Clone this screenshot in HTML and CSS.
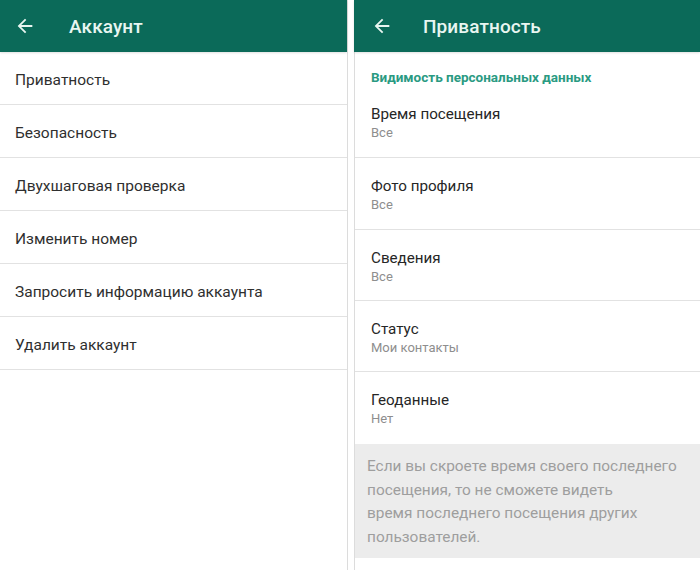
FILE: index.html
```html
<!DOCTYPE html>
<html lang="ru">
<head>
<meta charset="utf-8">
<link rel="stylesheet" href="styles.css">
</head>
<body>
<div class="screens">
  <section class="panel panel-left">
    <header class="appbar">
      <svg class="back" viewBox="0 0 24 24" width="22" height="22"><path d="M20 11H7.83l5.59-5.59L12 4l-8 8 8 8 1.41-1.41L7.83 13H20v-2z" fill="currentColor"/></svg>
      <h1 class="title">Аккаунт</h1>
    </header>
    <ul class="menu">
      <li class="menu-item">Приватность</li>
      <li class="menu-item">Безопасность</li>
      <li class="menu-item">Двухшаговая проверка</li>
      <li class="menu-item">Изменить номер</li>
      <li class="menu-item">Запросить информацию аккаунта</li>
      <li class="menu-item">Удалить аккаунт</li>
    </ul>
  </section>
  <section class="panel panel-right">
    <header class="appbar">
      <svg class="back" viewBox="0 0 24 24" width="22" height="22"><path d="M20 11H7.83l5.59-5.59L12 4l-8 8 8 8 1.41-1.41L7.83 13H20v-2z" fill="currentColor"/></svg>
      <h1 class="title">Приватность</h1>
    </header>
    <div class="section-title">Видимость персональных данных</div>
    <ul class="settings">
      <li class="setting"><div class="setting-name">Время посещения</div><div class="setting-value">Все</div></li>
      <li class="setting"><div class="setting-name">Фото профиля</div><div class="setting-value">Все</div></li>
      <li class="setting"><div class="setting-name">Сведения</div><div class="setting-value">Все</div></li>
      <li class="setting"><div class="setting-name">Статус</div><div class="setting-value">Мои контакты</div></li>
      <li class="setting setting-last"><div class="setting-name">Геоданные</div><div class="setting-value">Нет</div></li>
    </ul>
    <p class="note">Если вы скроете время своего последнего<br>посещения, то не сможете видеть<br>время последнего посещения других<br>пользователей.</p>
  </section>
</div>
</body>
</html>
```
FILE: styles.css
```css
* { box-sizing: border-box; }
html, body {
  margin: 0;
  padding: 0;
  background: #ffffff;
}
body {
  font-family: Roboto, "Noto Sans", "Liberation Sans", sans-serif;
  width: 700px;
  height: 570px;
  overflow: hidden;
}
.screens {
  display: flex;
  gap: 6px;
  height: 570px;
}
.panel {
  display: flex;
  flex-direction: column;
  height: 570px;
}
.panel-left {
  width: 348px;
  border-right: 1px solid #dcdcdc;
}
.panel-right {
  flex: 1;
  border-left: 1px solid #dcdcdc;
}
.appbar {
  height: 52px;
  flex: none;
  background: #0b6a59;
  display: flex;
  align-items: center;
  color: #e8f6f1;
  box-shadow: 0 1px 2px rgba(0,0,0,0.12);
}
.panel-left .appbar { padding-left: 14px; }
.panel-right .appbar { padding-left: 17px; margin-left: -1px; }
.back { flex: none; }
.title {
  margin: 0;
  font-size: 19px;
  font-weight: 500;
  letter-spacing: 0.1px;
}
.panel-left .title { margin-left: 33px; }
.panel-right .title { margin-left: 30px; }
.menu, .settings {
  list-style: none;
  margin: 0;
  padding: 0;
}
.menu-item {
  height: 53px;
  border-bottom: 1px solid #e2e2e2;
  display: flex;
  align-items: center;
  padding: 3px 15px 0;
  font-size: 15.5px;
  color: #2f2f2f;
}
.section-title {
  height: 34px;
  padding: 17px 0 0 16px;
  font-size: 13.5px;
  line-height: 16px;
  font-weight: 700;
  color: #2a9a82;
}
.setting {
  height: 72px;
  padding: 18px 16px 0;
  border-bottom: 1px solid #e2e2e2;
}
.setting:nth-child(n+3) { height: 71px; }
.setting-last { border-bottom: none; height: 72px !important; }
.setting-name {
  font-size: 15.2px;
  line-height: 20px;
  color: #262626;
}
.setting-value {
  font-size: 13px;
  line-height: 18px;
  color: #8e8e8e;
}
.note {
  margin: 0;
  background: #ececec;
  padding: 11px 12px 8px 12px;
  font-size: 15.4px;
  line-height: 23.5px;
  color: #9e9e9e;
  height: 114px;
}
```
